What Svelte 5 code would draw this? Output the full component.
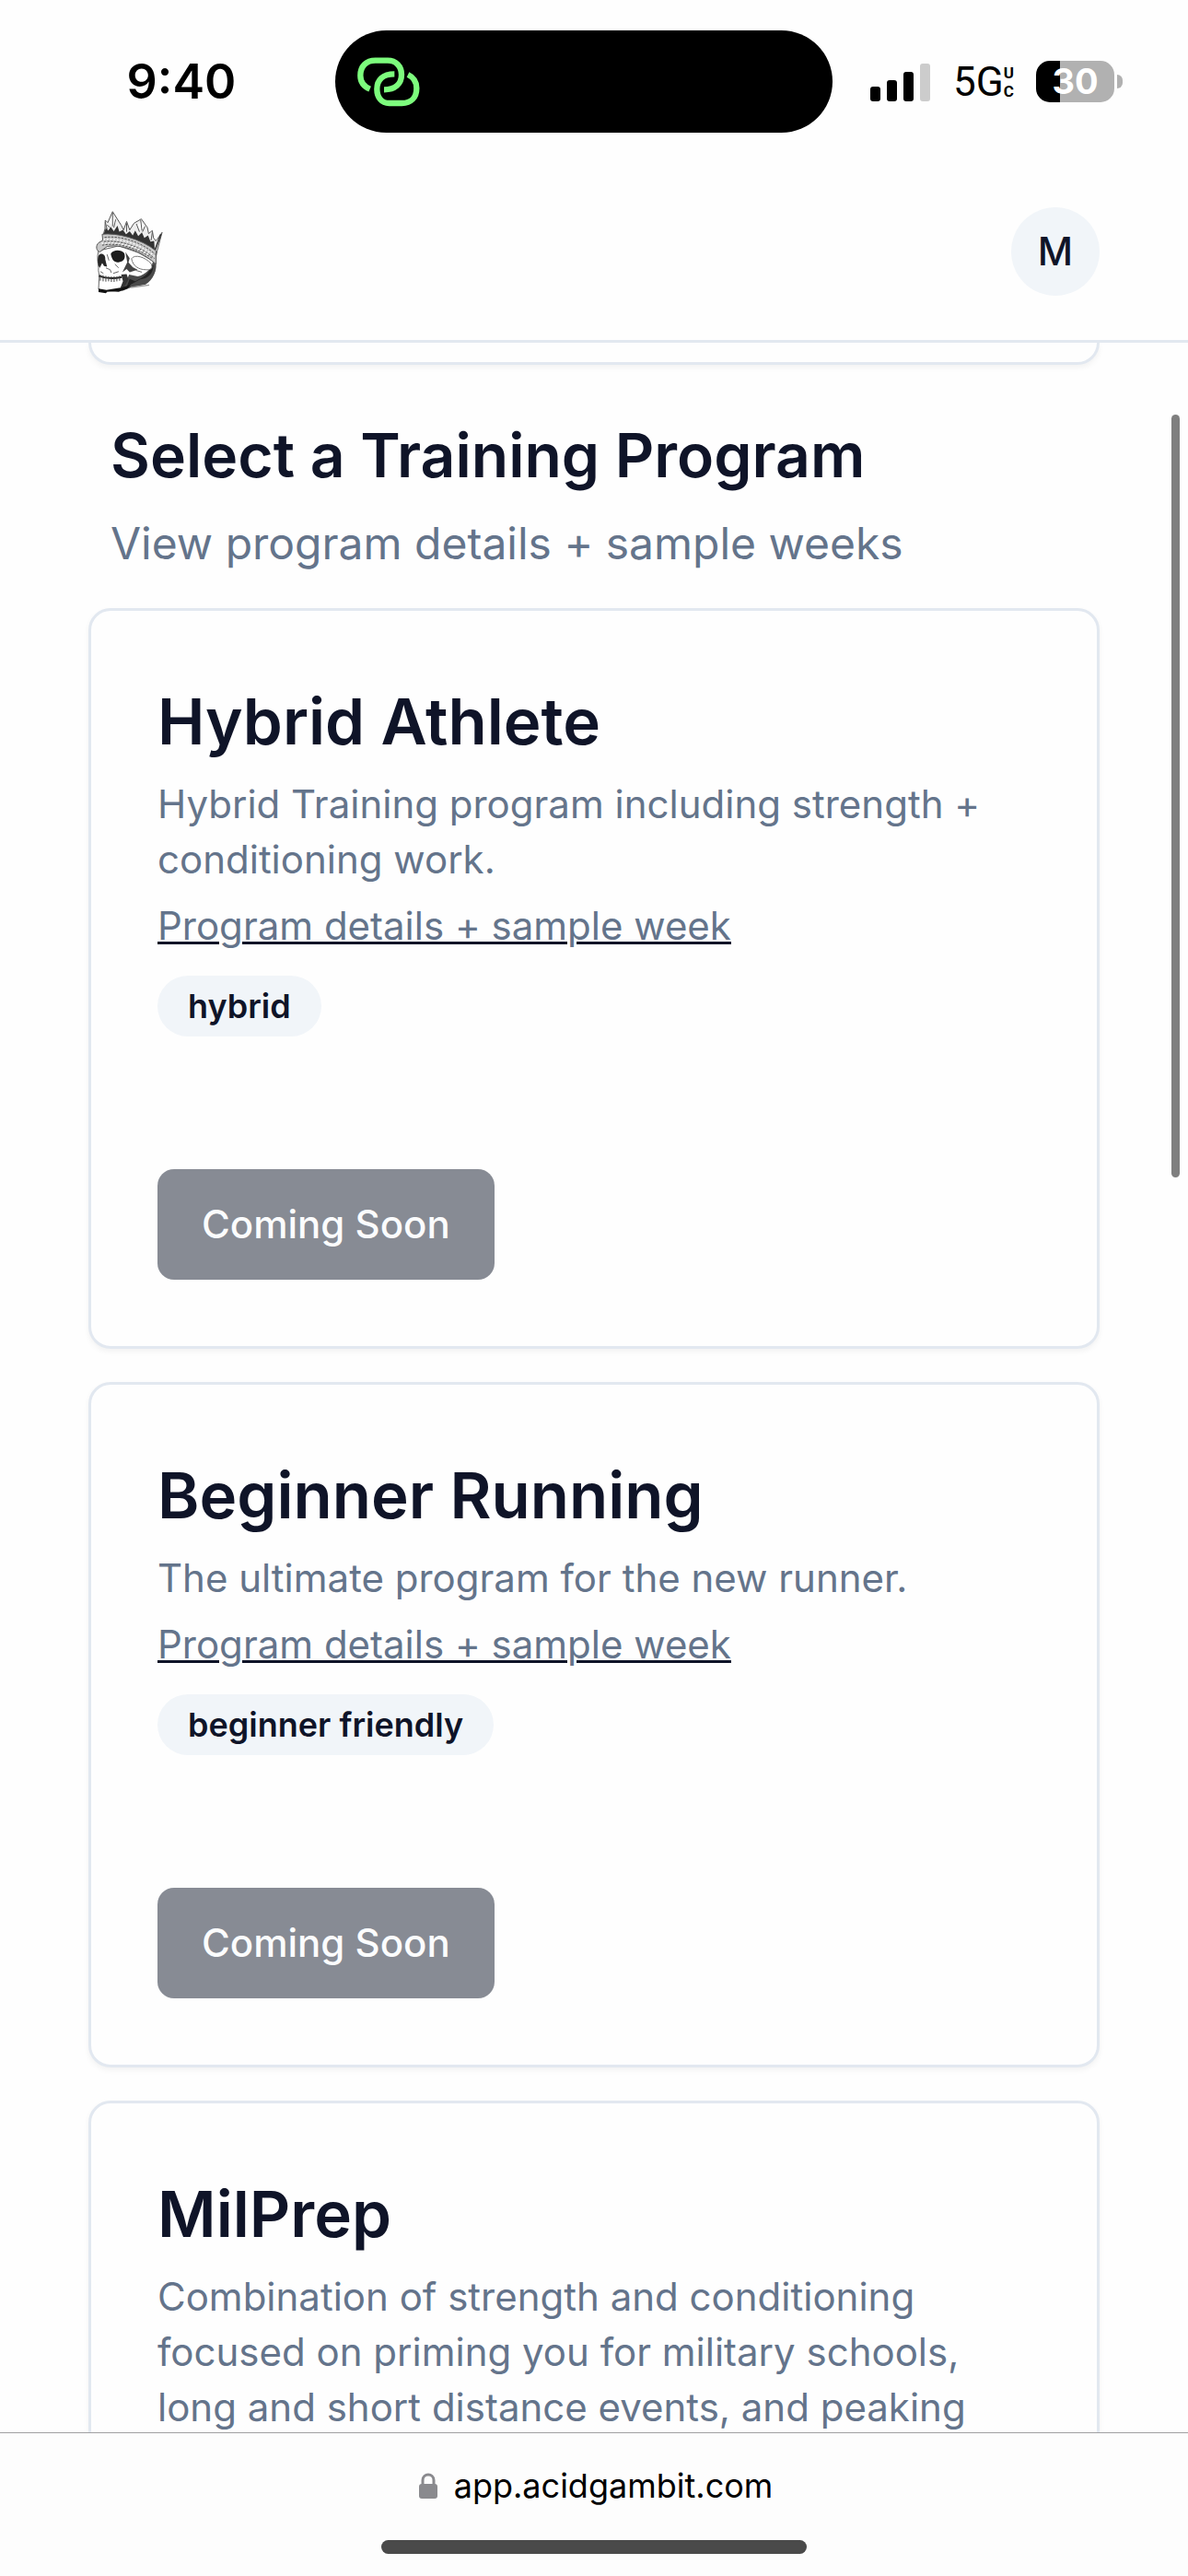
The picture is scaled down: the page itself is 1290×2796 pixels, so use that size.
<script lang="ts">
  type Program = {
    title: string;
    description: string;
    tag?: string;
  };

  const programs: Program[] = [
    {
      title: 'Hybrid Athlete',
      description: 'Hybrid Training program including strength + conditioning work.',
      tag: 'hybrid',
    },
    {
      title: 'Beginner Running',
      description: 'The ultimate program for the new runner.',
      tag: 'beginner friendly',
    },
    {
      title: 'MilPrep',
      description:
        'Combination of strength and conditioning focused on priming you for military schools, long and short distance events, and peaking',
    },
  ];
</script>

<div class="screen">
  <div class="status">
    <span class="time">9:40</span>
    <div class="island">
      <svg class="link-icon" viewBox="86 95 204 162" aria-hidden="true">
        <g fill="none" stroke="#7dfc7d" stroke-width="19">
          <path d="M127 199C106 190 96 173 96 155C96 125 115 106 145 106H185C212 106 230 125 230 152C230 182 209 201 173 201" />
          <path d="M251 152C270 161 279 178 279 196C279 226 261 245 231 245H190C165 245 150 226 150 199C150 169 169 150 207 150" />
        </g>
      </svg>
    </div>
    <div class="indicators">
      <svg class="signal" viewBox="0 0 66 42" aria-hidden="true">
        <rect x="0" y="26" width="11" height="16" rx="3" />
        <rect x="18" y="19" width="11" height="23" rx="3" />
        <rect x="36" y="10" width="11" height="32" rx="3" />
        <rect x="54" y="1" width="11" height="41" rx="3" fill="#ccc" />
      </svg>
      <span class="network">5G<span class="uc"><span>U</span><span>C</span></span></span>
      <div class="battery"><span class="level">30</span></div>
    </div>
  </div>

  <header>
    <a href="#home" aria-label="Home">
      <svg class="logo" viewBox="75 52 220 272" aria-hidden="true">
        <!-- skull -->
        <path fill="#fff" stroke="#666" stroke-width="3" d="M84 184C78 205 82 222 84 240C82 252 88 260 86 274L84 310L112 318L160 312L188 302L236 292C262 272 276 246 270 222L214 190L150 168Z" />
        <path fill="#4a4a4a" d="M270 222C276 250 262 280 238 294L196 302L160 316L172 292L184 262L212 268C238 262 258 242 262 218Z" />
        <path fill="#222" d="M264 232C262 262 244 276 220 278L190 294L174 308L186 276L204 284C228 272 250 264 256 232Z" />
        <path fill="#fff" stroke="#777" stroke-width="3" d="M192 210C202 194 236 204 256 226C264 242 254 248 238 246C216 246 196 234 192 210Z" />
        <path fill="#1c1c1c" d="M124 194C132 178 160 180 168 192C174 208 166 220 152 221C138 224 128 216 124 194Z" />
        <path fill="#262626" d="M84 200C92 188 108 196 106 212L112 236L102 234L96 224L88 240C80 228 80 210 84 200Z" />
        <path fill="#444" d="M172 188L186 208L182 222L196 238L212 246L186 254L176 244L162 254L172 234L178 222Z" />
        <path fill="none" stroke="#666" stroke-width="3" d="M112 196L118 216M108 240L122 246L126 256M138 228L150 240M90 252L100 258M132 258L150 252M206 248L226 254" />
        <path fill="none" stroke="#222" stroke-width="6" d="M85 266C104 274 134 276 160 270" />
        <path fill="none" stroke="#444" stroke-width="3" d="M90 262V282M99 264V284M108 266V285M117 268V284M126 268V286M135 268V286M144 268V284M153 266V282" />
        <path fill="#333" d="M158 262L176 260L182 278L166 306L156 304L164 284Z" />
        <path fill="#111" d="M84 308L110 312L160 304L190 296L178 308L150 318L114 316L108 323L84 319Z" />
        <path stroke="#999" stroke-width="4" d="M190 304L250 296" />
        <!-- crown spikes -->
        <path fill="#eee" stroke="#555" stroke-width="3" d="M99 134L105 112L106 84L114 92L130 56L158 100L166 116L176 88L186 116L200 94L224 80L244 108L248 128L260 118L264 142L272 152L292 124L276 184L270 214Z" />
        <path fill="#333" d="M102 126L108 110L116 118L124 106L134 120L146 102L152 122L164 116L174 130L186 120L196 134L204 118L214 136L226 124L234 142L246 134L254 154L266 152L268 184L232 164L168 140L102 132Z" />
        <path fill="#fff" d="M130 68L142 92L130 102L120 92ZM222 90L236 108L222 116L208 104Z" />
        <path fill="none" stroke="#555" stroke-width="3" d="M130 60V104M112 100L122 108M140 82L134 108M222 84L226 118M208 96L218 122M236 104L228 122M176 94V122M260 124L256 150M106 90L112 114" />
        <path stroke="#333" stroke-width="5" d="M288 130L268 184" />
        <!-- crown band -->
        <path fill="#c8c8c8" stroke="#555" stroke-width="3" d="M96 130C142 124 222 144 272 184L272 228C240 198 172 160 112 170L88 188C76 184 74 168 84 158L98 150Z" />
        <path fill="none" stroke="#555" stroke-width="3" stroke-dasharray="7 4" d="M104 140C156 134 224 154 270 196M102 154C154 148 222 170 268 210M96 166C154 154 216 180 262 210" />
        <path fill="none" stroke="#fff" stroke-width="4" stroke-dasharray="5 6" d="M100 147C156 142 224 162 266 202M94 160C150 152 208 170 250 198" />
      </svg>
    </a>
    <button type="button" class="avatar" aria-label="Account M">M</button>
  </header>

  <main>
    <div class="card previous"></div>
    <div class="intro">
      <h1>Select a Training Program</h1>
      <p>View program details + sample weeks</p>
    </div>
    <div class="programs">
      {#each programs as program (program.title)}
        <article class="card">
          <h2>{program.title}</h2>
          <p>{program.description}</p>
          {#if program.tag}
            <a class="details" href="#details"><span>Program details + sample week</span></a>
            <span class="tag">{program.tag}</span>
            <button type="button" class="cta" disabled>Coming Soon</button>
          {/if}
        </article>
      {/each}
    </div>
  </main>
  <div class="scrollbar"></div>

  <footer>
    <div class="address">
      <svg class="lock" viewBox="0 0 20 28" aria-hidden="true">
        <path fill="none" stroke="#8a8a8e" stroke-width="3" d="M4 14V8C4 0 16 0 16 8V14" />
        <rect y="12" width="20" height="16" rx="3" fill="#8a8a8e" />
      </svg>
      <span>app.acidgambit.com</span>
    </div>
    <div class="home-indicator"></div>
  </footer>
</div>

<style>
  :global(body) {
    margin: 0;
    background: #fff;
  }

  .screen {
    --text: #0f1428;
    --muted: #64748b;
    --border: #e2e8f0;
    --subtle: #f1f5f9;
    position: relative;
    display: flex;
    flex-direction: column;
    height: 100vh;
    overflow: hidden;
    background: #fefefe;
    color: var(--text);
    font-family: Inter, 'Liberation Sans', sans-serif;
    font-size: 42px;
    line-height: 60px;
  }

  .screen * {
    box-sizing: border-box;
  }

  h1,
  h2,
  p {
    margin: 0;
  }

  button {
    appearance: none;
    border: none;
    font: inherit;
  }

  /* Status bar */
  .status {
    display: grid;
    grid-template-columns: 364fr 540px 386fr;
    align-items: center;
    padding-top: 33px;
    color: #000;
  }

  .time {
    padding-left: 30px;
    font-size: 52px;
    font-weight: 600;
    text-align: center;
  }

  .island {
    display: flex;
    align-items: center;
    height: 111px;
    padding-left: 24px;
    border-radius: 56px;
    background: #000;
  }

  .link-icon {
    width: 68px;
    height: 54px;
  }

  .indicators {
    display: flex;
    align-items: center;
    justify-content: flex-end;
    gap: 24px;
    padding-right: 80px;
  }

  .signal {
    width: 66px;
    height: 42px;
  }

  .network {
    display: flex;
    align-items: center;
    font-family: Roboto, sans-serif;
    font-size: 44px;
    line-height: 48px;
  }

  .uc {
    display: flex;
    flex-direction: column;
    font-size: 17px;
    font-weight: 700;
    line-height: 20px;
  }

  .battery {
    position: relative;
    display: flex;
    align-items: center;
    justify-content: center;
    width: 85px;
    height: 45px;
    border-radius: 15px;
    background: linear-gradient(to right, #000 26px, #b1b1b1 26px);
    color: #fff;
  }

  .battery::after {
    content: '';
    position: absolute;
    left: 88px;
    top: 15px;
    width: 6px;
    height: 15px;
    border-radius: 0 6px 6px 0;
    background: #b1b1b1;
  }

  .level {
    font-size: 38px;
    font-weight: 700;
    line-height: 45px;
  }

  /* App header */
  header {
    display: flex;
    align-items: center;
    justify-content: space-between;
    padding: 81px 96px 48px;
    border-bottom: 3px solid var(--border);
  }

  header a {
    display: flex;
    padding-left: 8px;
  }

  .logo {
    width: 73px;
    height: 91px;
  }

  .avatar {
    width: 96px;
    height: 96px;
    padding: 0;
    border-radius: 50%;
    background: var(--subtle);
    color: var(--text);
    font-weight: 500;
  }

  /* Content */
  main {
    flex: 1;
    min-height: 0;
    overflow: hidden;
    padding: 0 96px;
  }

  .card {
    display: flex;
    flex-direction: column;
    align-items: flex-start;
    min-height: 744px;
    padding: 72px;
    border: 3px solid var(--border);
    border-radius: 24px;
    background: #fefefe;
    box-shadow: 0 3px 6px rgba(0, 0, 0, 0.05);
  }

  .previous {
    min-height: 24px;
    padding: 0;
    border-top: none;
    border-radius: 0 0 24px 24px;
  }

  .intro {
    display: flex;
    flex-direction: column;
    gap: 12px;
    padding: 50px 24px 34px;
  }

  h1,
  h2 {
    font-weight: 600;
    line-height: 96px;
  }

  h1 {
    font-size: 66px;
  }

  h2 {
    font-size: 69px;
  }

  .intro p {
    color: var(--muted);
    font-size: 48px;
    line-height: 72px;
  }

  .programs {
    display: flex;
    flex-direction: column;
    gap: 36px;
  }

  .card p {
    margin-top: 12px;
    color: var(--muted);
  }

  .details {
    margin-top: 12px;
    color: var(--text);
    text-decoration: underline;
    text-decoration-thickness: 3px;
  }

  .details span {
    color: var(--muted);
  }

  .tag {
    margin-top: 24px;
    padding: 9px 33px;
    border-radius: 33px;
    background: var(--subtle);
    font-size: 36px;
    font-weight: 600;
    line-height: 48px;
  }

  .cta {
    height: 120px;
    margin-top: 144px;
    padding: 0 48px;
    border-radius: 18px;
    background: #878b94;
    color: #fbfcfd;
    font-weight: 500;
  }

  .scrollbar {
    position: absolute;
    top: 450px;
    right: 9px;
    width: 9px;
    height: 828px;
    border-radius: 5px;
    background: #7f7f7f;
  }

  /* Browser bar */
  footer {
    display: flex;
    flex-direction: column;
    align-items: center;
    justify-content: space-between;
    height: 156px;
    padding: 27px 0 24px;
    border-top: 1px solid #a0a0a2;
    background: #fdfdfd;
    color: #000;
  }

  .address {
    display: flex;
    align-items: center;
    gap: 18px;
    padding-left: 4px;
    font-size: 36px;
  }

  .lock {
    width: 20px;
    height: 28px;
  }

  .home-indicator {
    width: 462px;
    height: 15px;
    border-radius: 8px;
    background: #4a4a4a;
  }
</style>
